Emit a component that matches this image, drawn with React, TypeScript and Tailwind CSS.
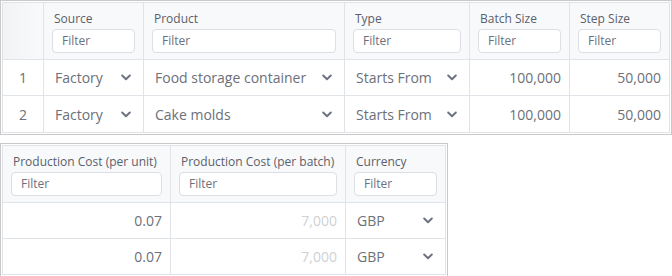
import React from "react";

const Chevron = () => (
  <svg width="10" height="7" viewBox="0 0 10 7" className="shrink-0">
    <polyline points="1.2,1.5 5,5.2 8.8,1.5" fill="none" stroke="#6e7381" strokeWidth="2" strokeLinecap="round" strokeLinejoin="round" />
  </svg>
);

const HeaderCell = ({ label, w, last }: { label: string; w: string; last?: boolean }) => (
  <div className={`${w} ${last ? "" : "border-r"} border-[#e0e4e8] h-[56px] pt-[7px] px-[8px] flex flex-col`}>
    <div className="pl-[2px] text-[12px] leading-[18px] text-[#5a5f6b] whitespace-nowrap">{label}</div>
    <div className="mt-[1px] h-[24px] w-full rounded-[4px] border border-[#dcdfe4] bg-white pl-[9px] flex items-center text-[12px] text-[#6b7080]">
      Filter
    </div>
  </div>
);

const SelectCell = ({ value, w, last }: { value: string; w: string; last?: boolean }) => (
  <div className={`${w} ${last ? "" : "border-r"} border-[#e0e4e8] h-full pl-[11px] pr-[12px] flex items-center justify-between text-[14px] text-[#6c7079]`}>
    <span className="whitespace-nowrap">{value}</span>
    <Chevron />
  </div>
);

const NumCell = ({ value, w, last, muted }: { value: string; w: string; last?: boolean; muted?: boolean }) => (
  <div className={`${w} ${last ? "" : "border-r"} border-[#e0e4e8] h-full pr-[8px] flex items-center justify-end text-[14px] ${muted ? "text-[#cfd1d4]" : "text-[#6c7079]"}`}>
    {value}
  </div>
);

export default function App() {
  const rows = [
    { n: "1", product: "Food storage container" },
    { n: "2", product: "Cake molds" },
  ];
  return (
    <div className="w-[672px] h-[276px] bg-white" style={{ fontFamily: '"Open Sans", "Noto Sans", sans-serif' }}>
      <div className="w-[672px] border border-[#c9c9c9] p-px">
        <div className="border border-[#e0e4e8]">
          <div className="flex bg-[#f7f9fb] border-b border-[#e0e4e8]">
            <div className="w-[41px] border-r border-[#e0e4e8] h-[56px] bg-gradient-to-r from-[#f1f3f5] to-[#f9fafb]" />
            <HeaderCell label="Source" w="w-[100px]" />
            <HeaderCell label="Product" w="w-[201px]" />
            <HeaderCell label="Type" w="w-[125px]" />
            <HeaderCell label="Batch Size" w="w-[100px]" />
            <HeaderCell label="Step Size" w="flex-1" last />
          </div>
          {rows.map((r, i) => (
            <div key={r.n} className={`flex h-[36px] ${i === 0 ? "border-b border-[#e0e4e8] h-[36px]" : "h-[35px]"}`}>
              <div className="w-[41px] border-r border-[#e0e4e8] h-full flex items-center justify-center text-[14px] text-[#6c7079]">{r.n}</div>
              <SelectCell value="Factory" w="w-[100px]" />
              <SelectCell value={r.product} w="w-[201px]" />
              <SelectCell value="Starts From" w="w-[125px]" />
              <NumCell value="100,000" w="w-[100px]" />
              <NumCell value="50,000" w="flex-1" last />
            </div>
          ))}
        </div>
      </div>

      <div className="mt-[8px] w-[448px] border border-[#c9c9c9] p-px">
        <div className="border border-[#e0e4e8]">
          <div className="flex bg-[#f7f9fb] border-b border-[#e0e4e8]">
            <HeaderCell label="Production Cost (per unit)" w="w-[168px]" />
            <HeaderCell label="Production Cost (per batch)" w="w-[175px]" />
            <HeaderCell label="Currency" w="flex-1" last />
          </div>
          {[0, 1].map((i) => (
            <div key={i} className={`flex ${i === 0 ? "border-b border-[#e0e4e8] h-[36px]" : "h-[35px]"}`}>
              <NumCell value="0.07" w="w-[168px]" />
              <NumCell value="7,000" w="w-[175px]" muted />
              <SelectCell value="GBP" w="flex-1" last />
            </div>
          ))}
        </div>
      </div>
    </div>
  );
}
